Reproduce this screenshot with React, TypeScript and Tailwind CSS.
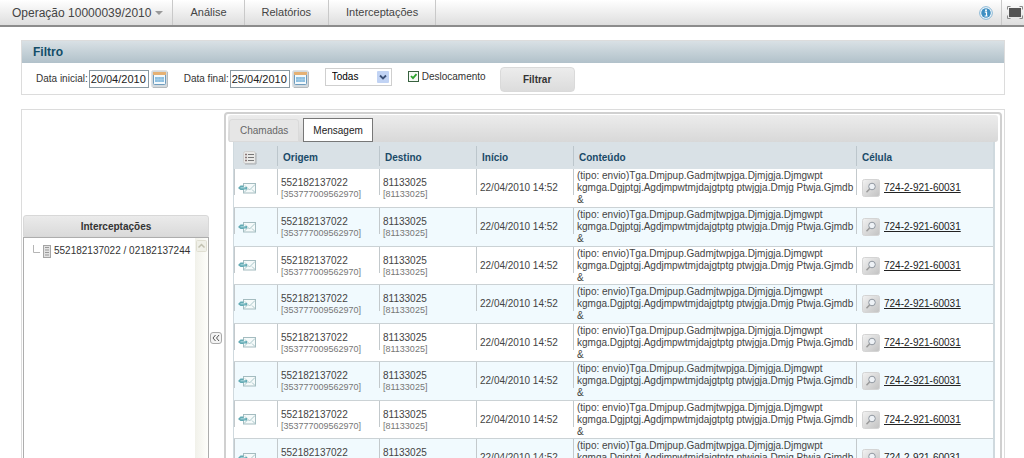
import { useState } from "react";

type Mensagem = {
  id: number;
  origem: string;
  imei: string;
  destino: string;
  inicio: string;
  conteudo: string;
  celula: string;
};

const MENSAGENS: Mensagem[] = Array.from({ length: 10 }, (_, i) => ({
  id: i,
  origem: "552182137022",
  imei: "353777009562970",
  destino: "81133025",
  inicio: "22/04/2010 14:52",
  conteudo:
    "(tipo: envio)Tga.Dmjpup.Gadmjtwpjga.Djmjgja.Djmgwpt kgmga.Dgjptgj.Agdjmpwtmjdajgtptg ptwjgja.Dmjg Ptwja.Gjmdb &",
  celula: "724-2-921-60031",
}));

const cell = "bg-[linear-gradient(#c3c9cc,#c3c9cc)] bg-[length:1px_26px] bg-no-repeat p-0 pt-px pl-1";
const headCell =
  "bg-[linear-gradient(#bcc6cc,#bcc6cc)] bg-[length:1px_20px] bg-left bg-no-repeat p-0 pl-[6px] pt-1 text-left font-bold text-[#1a4a68]";
const navItem = "flex h-full items-center border-r border-[#c9c9c9] px-[17px]";

function CalendarIcon() {
  return (
    <svg width="17" height="18" viewBox="0 0 17 18">
      <rect x="0.5" y="0.5" width="16" height="17" rx="2" fill="#d3d9dd" stroke="#dfe2e4" />
      <path d="M16.5 2v14a1.5 1.5 0 0 1-1.5 1.5H2" fill="none" stroke="#b5babd" />
      <rect x="2.5" y="2.5" width="12" height="12" rx="1" fill="#f3f9fc" stroke="#6f9cbd" />
      <path d="M2 2h13v3H2z" fill="#e5b174" />
      <path d="M4 7h9v5H4z" fill="#8dbfe0" />
      <path d="M4 9.5h9M7 7v5M10 7v5" stroke="#b0d4eb" strokeWidth="0.5" />
    </svg>
  );
}

function InfoIcon() {
  return (
    <svg width="14" height="14" viewBox="0 0 14 14">
      <circle cx="7" cy="7" r="6.3" fill="#fff" stroke="#7fb2d3" />
      <circle cx="7" cy="7" r="4.8" fill="#3e8fc2" />
      <circle cx="7" cy="4.2" r="1" fill="#fff" />
      <path d="M5.8 6.2h1.7v3.6M5.6 10h3" fill="none" stroke="#fff" strokeWidth="1.2" />
    </svg>
  );
}

function FullscreenIcon() {
  return (
    <svg width="16" height="13" viewBox="0 0 16 13">
      <rect x="2" y="2" width="12" height="9" fill="#555" />
      <path d="M0.5 3.5v-3h3M12.5 0.5h3v3M15.5 9.5v3h-3M3.5 12.5h-3v-3" fill="none" stroke="#8b8b8b" />
    </svg>
  );
}

function ListIcon() {
  return (
    <svg width="14" height="14" viewBox="0 0 14 14">
      <rect x="0.5" y="0.5" width="12" height="12" rx="2" fill="#e9e9e7" stroke="#d0d0ce" />
      <path d="M13 2v11H2" fill="none" stroke="#a9adb0" />
      <path d="M5 3.5h6M5 6.5h6M5 9.5h6" stroke="#777" />
      <path d="M2 3.5h2M2 6.5h2M2 9.5h2" stroke="#8b7878" strokeWidth="1.5" />
    </svg>
  );
}

function EnvioIcon() {
  return (
    <svg width="18" height="11" viewBox="0 0 18 11">
      <rect x="5.5" y="0.5" width="12" height="9.5" fill="#f5fafa" stroke="#a4bcc0" />
      <path d="M7 2.5l4.5 4.5L17 1.5M6 9.5l3.5-3.5M17 9.5l-3-3" fill="none" stroke="#a0bfc3" strokeWidth="0.9" />
      <path d="M0 5l2.5-2.5h3V4H9v2.5H5.5V7h-3z" fill="#62aab4" />
      <path d="M2.500 4.800h5" stroke="#b5dce0" />
    </svg>
  );
}

function LupaIcon() {
  return (
    <svg width="18" height="18" viewBox="0 0 18 18">
      <defs>
        <linearGradient id="lupa" x1="0" y1="0" x2="1" y2="1">
          <stop offset="0" stopColor="#f2f2f2" />
          <stop offset="1" stopColor="#c2c2c2" />
        </linearGradient>
      </defs>
      <rect x="0.5" y="0.5" width="17" height="17" rx="2" fill="url(#lupa)" stroke="#d4d4d4" />
      <circle cx="10" cy="7.5" r="3.3" fill="#eef2f6" stroke="#9097a0" />
      <path d="M7.6 10L4.5 13.2" stroke="#999" strokeWidth="1.5" />
    </svg>
  );
}

function Topo() {
  return (
    <nav className="flex h-[27px] items-center border-b-2 border-[#8c8c8c] bg-linear-to-b from-white to-[#dedede] pl-3 text-[11px] text-[#444]">
      <button type="button" className="flex h-full items-center gap-1 border-r border-[#c9c9c9] pr-[9px] text-xs">
        Operação 10000039/2010
        <svg width="8" height="4" viewBox="0 0 8 4">
          <path d="M0 0h8L4 4z" fill="#999" />
        </svg>
      </button>
      <a href="#analise" className={navItem}>Análise</a>
      <a href="#relatorios" className={navItem}>Relatórios</a>
      <a href="#interceptacoes" className={navItem}>Interceptações</a>
      <button type="button" aria-label="Informações" className="ml-auto flex h-full items-center border-r border-[#c9c9c9] pr-2">
        <InfoIcon />
      </button>
      <button type="button" aria-label="Tela cheia" className="pr-px pl-[5px]">
        <FullscreenIcon />
      </button>
    </nav>
  );
}

function CampoData({ id, label, inicial }: { id: string; label: string; inicial: string }) {
  const [valor, setValor] = useState(inicial);
  return (
    <div className="flex items-center">
      <label htmlFor={id} className="mr-px">{label}</label>
      <input
        id={id}
        value={valor}
        onChange={(e) => setValor(e.target.value)}
        className="h-[18px] w-[60px] border border-[#8b9aa3] bg-white px-px text-[11px] text-[#222] outline-none"
      />
      <button type="button" aria-label={`Calendário ${label}`} className="ml-[2px]">
        <CalendarIcon />
      </button>
    </div>
  );
}

function Filtro() {
  const [deslocamento, setDeslocamento] = useState(true);
  return (
    <section className="border border-[#dcdcdc] bg-white">
      <h2 className="flex h-[22px] items-center bg-linear-to-b from-[#d9e1e5] to-[#b1c1ca] px-[11px] text-xs font-bold text-[#124d68]">
        Filtro
      </h2>
      <form className="flex h-[31px] items-center pl-[14px]" onSubmit={(e) => e.preventDefault()}>
        <div className="flex gap-4">
          <CampoData id="data-inicial" label="Data inicial:" inicial="20/04/2010" />
          <CampoData id="data-final" label="Data final:" inicial="25/04/2010" />
        </div>
        <div className="ml-4 flex items-center pb-1">
          <div className="relative">
            <select
              aria-label="Tipo"
              className="block h-[18px] w-[67px] appearance-none border border-[#cfcfcf] bg-white pl-[6px] text-[10px] text-black outline-none"
            >
              <option>Todas</option>
            </select>
            <svg className="pointer-events-none absolute top-[3px] right-[3px]" width="12" height="12" viewBox="0 0 12 12">
              <rect width="12" height="12" rx="1" fill="#c1d3f4" />
              <path d="M3 4.500l3 3 3-3" fill="none" stroke="#3b5076" strokeWidth="1.800" />
            </svg>
          </div>
          <label className="ml-4 flex items-center gap-[3px]">
            <span className="relative block h-[11px] w-[11px]">
              <input
                type="checkbox"
                checked={deslocamento}
                onChange={(e) => setDeslocamento(e.target.checked)}
                className="peer block h-[11px] w-[11px] appearance-none border border-[#38613f] bg-[#f5faf5]"
              />
              <svg className="pointer-events-none absolute top-0 left-0 hidden peer-checked:block" width="11" height="11" viewBox="0 0 11 11">
                <path d="M3 5l2 2.200L8.500 3.200" fill="none" stroke="#2ba32b" strokeWidth="1.800" />
              </svg>
            </span>
            Deslocamento
          </label>
        </div>
        <button
          type="submit"
          className="mt-px ml-[14px] h-[25px] w-[75px] rounded-[4px] border border-[#dadada] bg-linear-to-b from-[#ececec] to-[#dcdcdc] text-[10px] font-bold text-[#333]"
        >
          Filtrar
        </button>
      </form>
    </section>
  );
}

function Arvore() {
  return (
    <aside className="flex h-[246px] w-[186px] shrink-0 flex-col">
      <h3 className="flex h-[22px] items-center justify-center rounded-t-[3px] border border-[#d8d8d8] bg-linear-to-b from-[#ebebeb] to-[#dadada] text-[10px] font-bold text-[#333]">
        Interceptações
      </h3>
      <div className="flex flex-1 border border-[#adadad] bg-white">
        <ul className="min-w-0 flex-1 pt-[3px]">
          <li className="flex items-center pl-2 whitespace-nowrap">
            <svg width="9" height="13" viewBox="0 0 9 13" className="mr-[2px] shrink-0">
              <path d="M1.5 0v7.5H8" fill="none" stroke="#b5b5b5" />
            </svg>
            <svg width="8" height="13" viewBox="0 0 8 13" className="mr-[3px] shrink-0">
              <rect x="0.5" y="0.5" width="7" height="12" fill="#e2e2e2" stroke="#a5a5a5" />
              <path d="M2 2.5h4M2 5h4M2 7.5h4M2 10h4" stroke="#999" />
            </svg>
            <span className="leading-5">552182137022 / 02182137244</span>
          </li>
        </ul>
        <div className="w-[13px] bg-linear-to-r from-[#f1f1ea] to-[#fefefb] pt-[2px] pl-px">
          <svg width="11" height="12" viewBox="0 0 11 12">
            <rect x="0.5" y="0.5" width="10" height="11" rx="1" fill="#f0f0e8" stroke="#e0dfd2" />
            <path d="M2.5 7.5l3-3 3 3" fill="none" stroke="#c2c1b0" strokeWidth="1.5" />
          </svg>
        </div>
      </div>
    </aside>
  );
}

function Tabela() {
  return (
    <table className="w-full table-fixed border-collapse text-[10px] leading-3 text-[#444]">
      <thead>
        <tr className="h-[27px] bg-[#d9e1e6]">
          <th className="w-[43px] p-0 pt-1 pl-[9px]"><ListIcon /></th>
          <th className={`${headCell} w-[102px]`}>Origem</th>
          <th className={`${headCell} w-[97px]`}>Destino</th>
          <th className={`${headCell} w-[97px]`}>Início</th>
          <th className={headCell}>Conteúdo</th>
          <th className={`${headCell} w-[137px]`}>Célula</th>
        </tr>
      </thead>
      <tbody>
        {MENSAGENS.map((m) => (
          <tr key={m.id} className="h-[38px] border-b border-[#cbd2d5] even:h-[39px] even:bg-[#f1fafe]">
            <td className={cell}><EnvioIcon /></td>
            <td className={cell}>
              {m.origem}
              <div className="text-[9px] leading-[10px] text-[#777]">[{m.imei}]</div>
            </td>
            <td className={cell}>
              {m.destino}
              <div className="text-[9px] leading-[10px] text-[#777]">[{m.destino}]</div>
            </td>
            <td className={cell}>{m.inicio}</td>
            <td className={cell}>{m.conteudo}</td>
            <td className={cell}>
              <div className="flex items-center gap-1 pl-[2px]">
                <button type="button" aria-label="Ver célula"><LupaIcon /></button>
                <a href="#celula" className="text-[#222] underline">{m.celula}</a>
              </div>
            </td>
          </tr>
        ))}
      </tbody>
    </table>
  );
}

export default function App() {
  const [arvoreAberta, setArvoreAberta] = useState(true);
  return (
    <div className="h-screen overflow-hidden bg-white font-['Liberation_Sans',Arial,sans-serif] text-[10px] text-[#333] [&_svg]:block">
      <Topo />
      <main className="pt-[13px] pr-[19px] pl-[21px]">
        <Filtro />
        <section className="mt-[14px] flex items-center border border-[#dcdcdc] pt-[2px] pr-[2px] pb-[2px] pl-px">
          {arvoreAberta && <Arvore />}
          <button
            type="button"
            aria-label="Recolher"
            onClick={() => setArvoreAberta(!arvoreAberta)}
            className="mr-[2px] ml-px flex h-3 w-3 shrink-0 items-center justify-center rounded-[3px] border border-[#aaa] bg-[#f4f4f4]"
          >
            <svg width="8" height="8" viewBox="0 0 8 8">
              <path d="M3.5 1L1 4l2.5 3M7 1L4.5 4 7 7" fill="none" stroke="#555" />
            </svg>
          </button>
          <div className="min-w-0 flex-1 rounded-[4px] border-2 border-[#d0d0d0] px-[2px] pt-px pb-2">
            <div role="tablist" className="flex h-[27px] items-end rounded-[3px] bg-linear-to-b from-[#ececec] to-[#d8d8d8] pl-px text-[10px]">
              <button
                type="button"
                role="tab"
                className="h-[23px] rounded-t-[3px] border border-[#dadada] bg-[#e6e6e6] px-[10px] text-[#666]"
              >
                Chamadas
              </button>
              <button
                type="button"
                role="tab"
                aria-selected="true"
                className="ml-1 h-[24px] border border-[#777] bg-white px-[9px] text-[#222]"
              >
                Mensagem
              </button>
            </div>
            <div className="mr-[3px] ml-[5px] border-r-2 border-l border-[#cfd9de]">
              <Tabela />
            </div>
          </div>
        </section>
      </main>
    </div>
  );
}
